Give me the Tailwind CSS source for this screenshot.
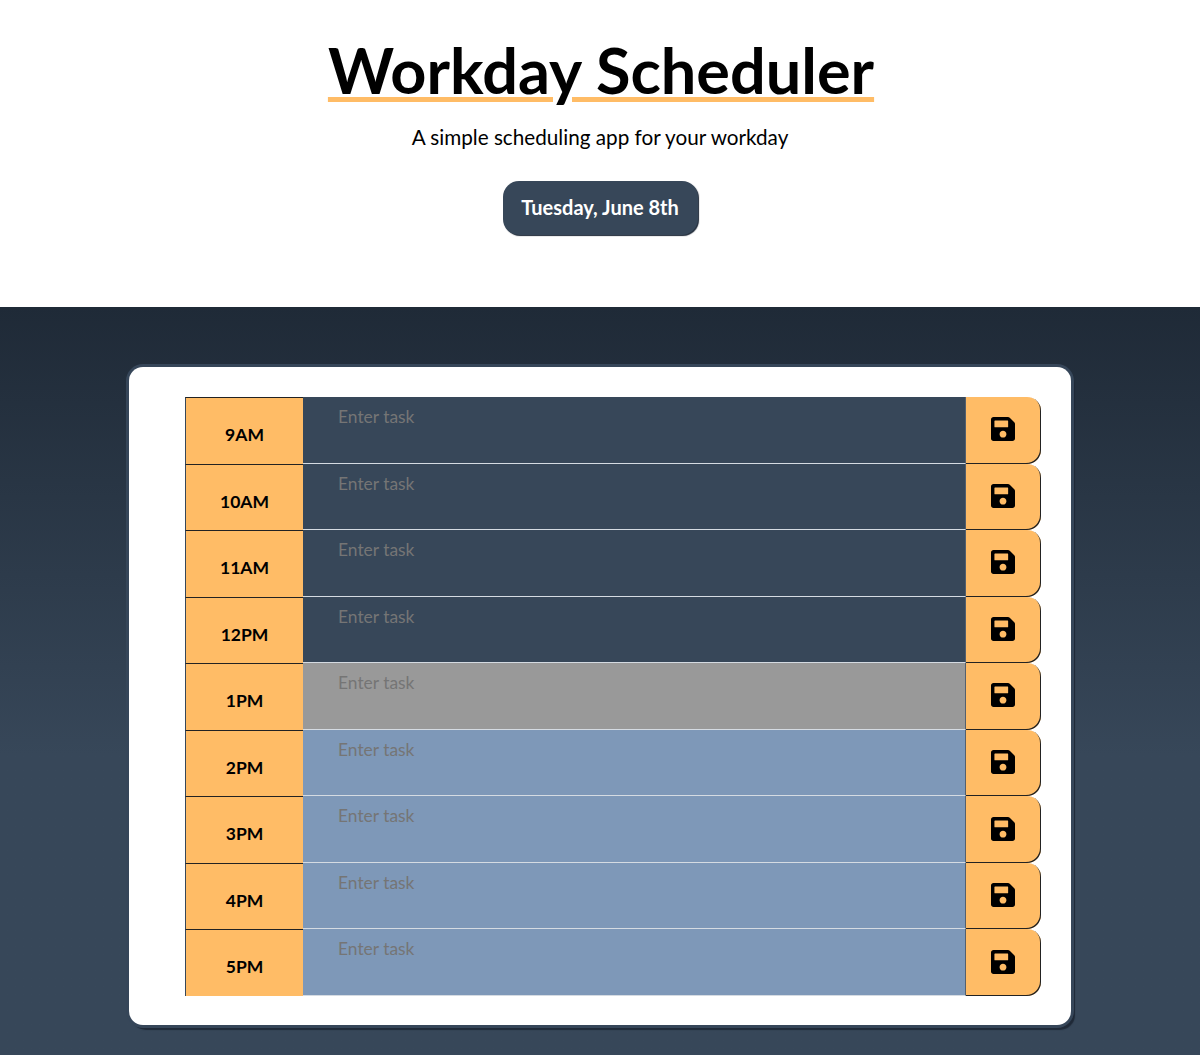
<!DOCTYPE html>
<html lang="en">
<head>
    <meta charset="UTF-8">
    <meta name="viewport" content="width=device-width, initial-scale=1.0">
    <title>Workday Scheduler</title>
    <script src="https://cdn.jsdelivr.net/npm/@tailwindcss/browser@4"></script>
</head>
<body class="h-screen overflow-hidden bg-white font-['Lato',sans-serif] text-black">
    <header class="h-[307px] flex flex-col items-center pt-[34px]">
        <h1 class="h-[68px] pl-[2px] text-[63px] leading-[72px] font-bold whitespace-nowrap underline decoration-[#ffbc66] decoration-[5px] underline-offset-[3px]">Workday Scheduler</h1>
        <p class="mt-[21px] text-[20.7px] leading-[28px]">A simple scheduling app for your workday</p>
        <div class="mt-[30px] h-[54px] w-[195px] flex items-center justify-center rounded-[16px] bg-[#374759] pb-[2px] text-[20px] font-bold text-white shadow-[1px_1px_1px_#1f2937]">Tuesday, June 8th</div>
    </header>

    <main class="h-[748px] pt-[60px] bg-gradient-to-b from-[#1f2a37] to-[#374759] to-[60%]">
        <div class="mx-auto w-[942px] h-[658px] pt-[30px] pl-[56px] pr-[30px] rounded-[14px] bg-white shadow-[0_0_0_3px_#364659,3px_4px_1px_1px_#1f2937]">
            <div id="rows"></div>
        </div>
    </main>

    <script>
        const rows = document.getElementById('rows');
        const hours = ['9AM', '10AM', '11AM', '12PM', '1PM', '2PM', '3PM', '4PM', '5PM'];
        const rowColors = ['bg-[#374759]', 'bg-[#374759]', 'bg-[#374759]', 'bg-[#374759]', 'bg-[#999999]', 'bg-[#7e98b8]', 'bg-[#7e98b8]', 'bg-[#7e98b8]', 'bg-[#7e98b8]'];

        hours.forEach((hour, i) => {
            rows.innerHTML += `
                <div class="flex h-[66.55px]">
                    <div class="w-[118px] shrink-0 border-l border-t border-l-[#374759] border-t-[#222] bg-[#ffbc66] pt-[26px] text-center text-[17.5px] leading-[22px] font-bold">${hour}</div>
                    <textarea placeholder="Enter task" class="flex-1 resize-none border-b border-r border-b-[#d5dbe2] border-r-[#55606c] pl-[35px] pt-[8px] text-[17.4px] leading-[24px] outline-none placeholder:text-[#757575] ${rowColors[i]}"></textarea>
                    <button class="w-[75px] shrink-0 flex items-center justify-center rounded-r-[14px] bg-[#ffbc66] pb-[2px] pr-[1px] shadow-[inset_-1px_-1px_0_#222]">
                        <svg xmlns="http://www.w3.org/2000/svg" viewBox="0 32 448 448" class="w-6 h-6" fill="currentColor"><path d="M433.941 129.941l-83.882-83.882A48 48 0 0 0 316.118 32H48C21.49 32 0 53.49 0 80v352c0 26.51 21.49 48 48 48h352c26.51 0 48-21.49 48-48V163.882a48 48 0 0 0-14.059-33.941zM224 416c-35.346 0-64-28.654-64-64 0-35.346 28.654-64 64-64s64 28.654 64 64c0 35.346-28.654 64-64 64zm96-304.52V212c0 6.627-5.373 12-12 12H76c-6.627 0-12-5.373-12-12V108c0-6.627 5.373-12 12-12h228.52c3.183 0 6.235 1.264 8.485 3.515l3.48 3.48A11.996 11.996 0 0 1 320 111.48z"/></svg>
                    </button>
                </div>`;
        });
    </script>
</body>
</html>
